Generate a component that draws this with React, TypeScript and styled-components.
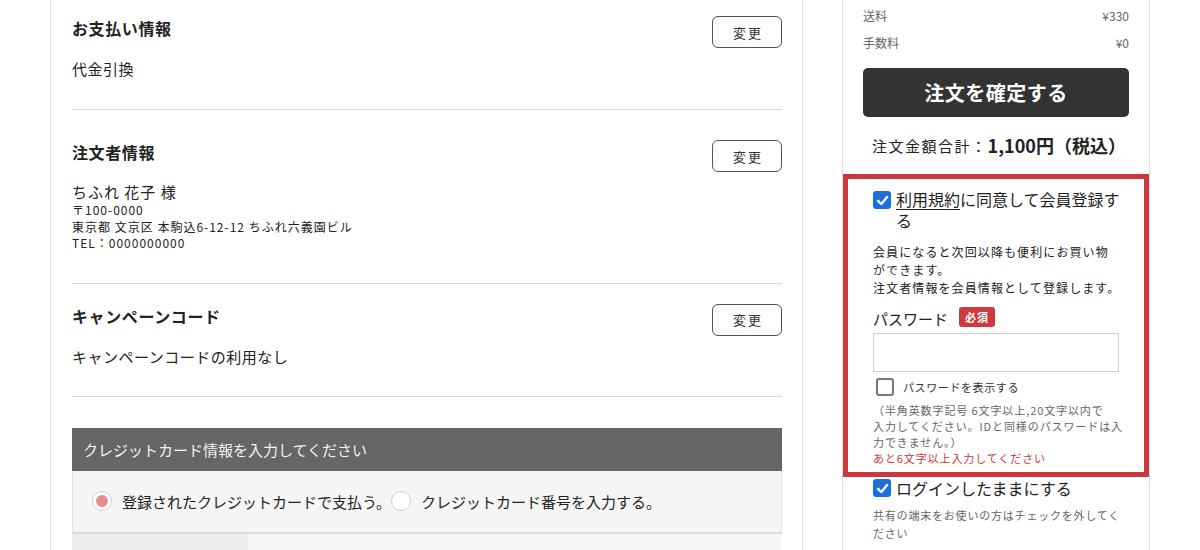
import React from 'react';
import styled, { createGlobalStyle } from 'styled-components';

const GlobalStyle = createGlobalStyle`
  html, body {
    margin: 0;
    padding: 0;
    background: #fff;
  }
  body {
    font-family: "Noto Sans CJK JP", "Noto Sans", sans-serif;
    color: #333;
    overflow: hidden;
  }
`;

const Page = styled.div`
  display: flex;
  align-items: stretch;
  height: 550px;
  padding-left: 50px;
  gap: 39px;
  overflow: hidden;
`;

const MainPanel = styled.div`
  width: 753px;
  box-sizing: border-box;
  border-left: 1px solid #ddd;
  border-right: 1px solid #ddd;
  padding: 0 20px 0 21px;
`;

const Section = styled.section<{ $padTop: number; $padBottom: number }>`
  padding-top: ${(p) => p.$padTop}px;
  padding-bottom: ${(p) => p.$padBottom}px;
  border-bottom: 1px solid #d6d6d6;
`;

const SectionHead = styled.div`
  display: flex;
  justify-content: space-between;
  align-items: flex-start;
  height: 32px;
`;

const SectionTitle = styled.h2`
  margin: 0;
  font-size: 16px;
  line-height: 24px;
  font-weight: 700;
  letter-spacing: 0.6px;
  color: #222;
`;

const ChangeButton = styled.button`
  width: 70px;
  height: 32px;
  box-sizing: border-box;
  border: 1px solid #555;
  border-radius: 6px;
  background: #fff;
  font-family: inherit;
  font-size: 13px;
  letter-spacing: 2px;
  color: #333;
  padding: 0 0 0 2px;
`;

const BodyText = styled.p`
  margin: 9px 0 0;
  font-size: 15px;
  line-height: 24px;
  letter-spacing: 0.5px;
  color: #222;
`;

const Customer = styled.div`
  margin-top: 9px;
  color: #222;
`;

const CustomerName = styled.div`
  font-size: 15px;
  line-height: 21px;
  letter-spacing: 1px;
`;

const AddressLine = styled.div`
  font-size: 12px;
  line-height: 16.5px;
  letter-spacing: 1px;
`;

const CardBox = styled.div`
  margin-top: 31px;
`;

const CardHeader = styled.div`
  height: 43px;
  line-height: 43px;
  background: #666;
  color: #f2f2f2;
  font-size: 15px;
  padding-left: 11px;
`;

const RadioRow = styled.div`
  display: flex;
  align-items: center;
  height: 61px;
  background: #f5f5f5;
  border-left: 1px solid #e2e2e2;
  border-right: 1px solid #e2e2e2;
  border-bottom: 2px solid #dcdcdc;
  padding-left: 19px;
`;

const RadioOption = styled.label`
  display: flex;
  align-items: center;
  gap: 10px;
  font-size: 15px;
  color: #222;
`;

const RadioDot = styled.span<{ $on?: boolean }>`
  width: 20px;
  height: 20px;
  box-sizing: border-box;
  border-radius: 50%;
  border: 1px solid #cfcfcf;
  background: #fff;
  display: flex;
  align-items: center;
  justify-content: center;
  &::after {
    content: '';
    width: 12px;
    height: 12px;
    border-radius: 50%;
    background: ${(p) => (p.$on ? '#e6908b' : 'transparent')};
  }
`;

const CardTableRow = styled.div`
  display: flex;
  height: 40px;
`;

const CardCell = styled.div<{ $label?: boolean }>`
  width: ${(p) => (p.$label ? '176px' : 'auto')};
  flex: ${(p) => (p.$label ? 'none' : '1')};
  background: ${(p) => (p.$label ? '#ececec' : '#f6f6f6')};
`;

const SidePanel = styled.aside`
  width: 308px;
  box-sizing: border-box;
  border-left: 1px solid #ddd;
  border-right: 1px solid #ddd;
  padding-top: 2px;
`;

const SideInner = styled.div`
  padding: 0 20px;
`;

const FeeRow = styled.div`
  display: flex;
  justify-content: space-between;
  height: 27px;
  align-items: center;
  font-size: 12px;
  color: #666;
`;

const ConfirmButton = styled.button`
  display: block;
  width: 100%;
  height: 49px;
  margin-top: 12px;
  border: none;
  border-radius: 5px;
  background: #333;
  color: #fff;
  font-family: inherit;
  font-size: 20px;
  font-weight: 700;
  letter-spacing: 0.5px;
`;

const Total = styled.div`
  display: flex;
  justify-content: center;
  align-items: center;
  height: 24px;
  margin-top: 16px;
  color: #222;
  padding-left: 6px;
`;

const TotalLabel = styled.span`
  font-size: 15px;
  letter-spacing: 1.5px;
`;

const TotalAmount = styled.span`
  font-size: 18px;
  font-weight: 700;
`;

const RegisterBox = styled.div`
  margin-top: 17px;
  border: 5px solid #c9383e;
  padding: 10px 20px 5px 25px;
`;

const CheckRow = styled.label`
  display: flex;
  align-items: flex-start;
  gap: 5px;
  font-size: 16px;
  line-height: 21px;
  color: #222;
`;

const CheckBox = styled.span<{ $on?: boolean; $offset?: number }>`
  flex: none;
  width: 18px;
  height: 18px;
  box-sizing: border-box;
  margin-top: ${(p) => p.$offset ?? 2}px;
  border-radius: 3px;
  background: ${(p) => (p.$on ? '#1b6ee0' : '#fff')};
  border: ${(p) => (p.$on ? 'none' : '2px solid #777')};
  display: flex;
  align-items: center;
  justify-content: center;
`;

const CheckLabel = styled.span`
  width: 228px;
`;

const Terms = styled.span`
  text-decoration: underline;
  text-underline-offset: 3px;
`;

const Desc = styled.p`
  margin: 12px 0 0;
  font-size: 12px;
  line-height: 18px;
  letter-spacing: 1.1px;
  color: #222;
  white-space: nowrap;
`;

const PasswordHead = styled.div`
  display: flex;
  align-items: center;
  gap: 11px;
  margin-top: 10px;
  height: 22px;
`;

const PasswordLabel = styled.span`
  font-size: 15px;
  color: #222;
`;

const RequiredBadge = styled.span`
  background: #d0393e;
  color: #fff;
  font-size: 11px;
  font-weight: 700;
  border-radius: 3px;
  padding: 0 6px;
  height: 20px;
  line-height: 20px;
  letter-spacing: 1px;
  margin-top: -2px;
`;

const PasswordInput = styled.input`
  display: block;
  width: 246px;
  height: 39px;
  box-sizing: border-box;
  margin-top: 4px;
  border: 1px solid #ccc;
  padding: 0 8px;
`;

const ShowRow = styled.label`
  display: flex;
  align-items: center;
  gap: 9px;
  margin-top: 6px;
  padding-left: 3px;
  height: 18px;
  font-size: 11px;
  letter-spacing: 0.6px;
  color: #333;
`;

const Note = styled.p<{ $alert?: boolean }>`
  margin: ${(p) => (p.$alert ? '0' : '6px 0 0')};
  font-size: 11px;
  line-height: ${(p) => (p.$alert ? 17 : 16)}px;
  letter-spacing: 0.9px;
  color: ${(p) => (p.$alert ? '#c9383e' : '#666')};
  white-space: nowrap;
`;

const LoginBlock = styled.div`
  padding: 1px 20px 0 30px;
`;

const LoginNote = styled.p`
  margin: 7px 0 0;
  width: 248px;
  font-size: 11px;
  line-height: 18px;
  letter-spacing: 0.8px;
  color: #666;
`;

const Check = () => (
  <svg width="13" height="13" viewBox="0 0 13 13">
    <path d="M2 6.8 L5.2 10 L11.2 3" fill="none" stroke="#fff" strokeWidth="2.4" strokeLinecap="round" strokeLinejoin="round" />
  </svg>
);

const App: React.FC = () => {
  return (
    <>
      <GlobalStyle />
      <Page>
        <MainPanel>
          <Section $padTop={16} $padBottom={28}>
            <SectionHead>
              <SectionTitle>お支払い情報</SectionTitle>
              <ChangeButton>変更</ChangeButton>
            </SectionHead>
            <BodyText>代金引換</BodyText>
          </Section>

          <Section $padTop={30} $padBottom={31}>
            <SectionHead>
              <SectionTitle>注文者情報</SectionTitle>
              <ChangeButton>変更</ChangeButton>
            </SectionHead>
            <Customer>
              <CustomerName>ちふれ 花子 様</CustomerName>
              <AddressLine>〒100-0000</AddressLine>
              <AddressLine>東京都 文京区 本駒込6-12-12 ちふれ六義園ビル</AddressLine>
              <AddressLine>TEL：0000000000</AddressLine>
            </Customer>
          </Section>

          <Section $padTop={20} $padBottom={27}>
            <SectionHead>
              <SectionTitle>キャンペーンコード</SectionTitle>
              <ChangeButton>変更</ChangeButton>
            </SectionHead>
            <BodyText>キャンペーンコードの利用なし</BodyText>
          </Section>

          <CardBox>
            <CardHeader>クレジットカード情報を入力してください</CardHeader>
            <RadioRow>
              <RadioOption>
                <RadioDot $on />
                登録されたクレジットカードで支払う。
              </RadioOption>
              <RadioOption>
                <RadioDot />
                クレジットカード番号を入力する。
              </RadioOption>
            </RadioRow>
            <CardTableRow>
              <CardCell $label />
              <CardCell />
            </CardTableRow>
          </CardBox>
        </MainPanel>

        <SidePanel>
          <SideInner>
            <FeeRow>
              <span>送料</span>
              <span>¥330</span>
            </FeeRow>
            <FeeRow>
              <span>手数料</span>
              <span>¥0</span>
            </FeeRow>
            <ConfirmButton>注文を確定する</ConfirmButton>
            <Total>
              <TotalLabel>注文金額合計：</TotalLabel>
              <TotalAmount>1,100円（税込）</TotalAmount>
            </Total>
          </SideInner>

          <RegisterBox>
            <CheckRow>
              <CheckBox $on $offset={2}>
                <Check />
              </CheckBox>
              <CheckLabel>
                <Terms>利用規約</Terms>に同意して会員登録する
              </CheckLabel>
            </CheckRow>
            <Desc>
              会員になると次回以降も便利にお買い物
              <br />
              ができます。
              <br />
              注文者情報を会員情報として登録します。
            </Desc>
            <PasswordHead>
              <PasswordLabel>パスワード</PasswordLabel>
              <RequiredBadge>必須</RequiredBadge>
            </PasswordHead>
            <PasswordInput type="password" />
            <ShowRow>
              <CheckBox $offset={0} />
              パスワードを表示する
            </ShowRow>
            <Note>
              （半角英数字記号 6文字以上,20文字以内で
              <br />
              入力してください。IDと同様のパスワードは入
              <br />
              力できません。）
            </Note>
            <Note $alert>あと6文字以上入力してください</Note>
          </RegisterBox>

          <LoginBlock>
            <CheckRow>
              <CheckBox $on $offset={1}>
                <Check />
              </CheckBox>
              <span>ログインしたままにする</span>
            </CheckRow>
            <LoginNote>共有の端末をお使いの方はチェックを外してください</LoginNote>
          </LoginBlock>
        </SidePanel>
      </Page>
    </>
  );
};

export default App;
